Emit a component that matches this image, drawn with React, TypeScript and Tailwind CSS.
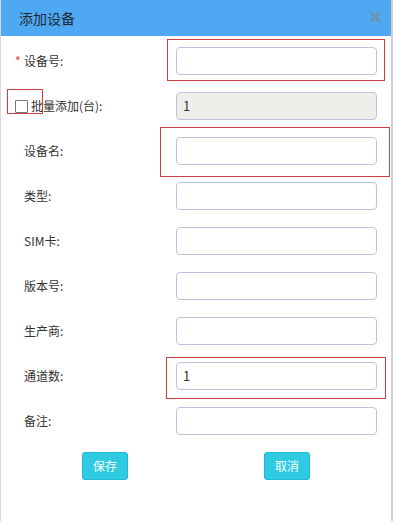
import React from "react";

const font = { fontFamily: '"Microsoft YaHei", "Noto Sans CJK SC", "Noto Sans", sans-serif' };

const rows = [
  { label: "设备号:", required: true, value: "" },
  { label: "批量添加(台):", checkbox: true, value: "1", disabled: true },
  { label: "设备名:", value: "" },
  { label: "类型:", value: "" },
  { label: "SIM卡:", value: "" },
  { label: "版本号:", value: "" },
  { label: "生产商:", value: "" },
  { label: "通道数:", value: "1" },
  { label: "备注:", value: "" },
];

export default function App() {
  return (
    <div
      className="relative w-[393px] h-[521px] bg-white border-l border-l-[#d8d8d8] border-r-2 border-r-[#d0d0d0] overflow-hidden"
      style={font}
    >
      {/* Header */}
      <div className="h-[36px] bg-[#4ea9f2] flex items-center justify-between pl-[18px] pr-[10px]">
        <span className="text-[14px] text-[#1d2a36]">添加设备</span>
        <svg width="12" height="12" viewBox="0 0 12 12" className="mt-[-2px]">
          <path d="M2 2 L10 10 M10 2 L2 10" stroke="#6e92b2" strokeWidth="2.8" strokeLinecap="round" />
        </svg>
      </div>

      {/* Form */}
      <div className="flex flex-col gap-[17px] pt-[11px]">
        {rows.map((r, i) => (
          <div key={i} className="flex items-center h-[28px]">
            <div className="w-[175px] flex items-center text-[12px] text-[#333]">
              {r.required ? (
                <>
                  <span className="w-[9px] ml-[14px] text-[#e53935] text-[12px]">*</span>
                  <span>{r.label}</span>
                </>
              ) : r.checkbox ? (
                <>
                  <span className="ml-[14px] w-[13px] h-[13px] border border-[#777] bg-white rounded-[1px]" />
                  <span className="ml-[3px]">{r.label}</span>
                </>
              ) : (
                <span className="ml-[23px]">{r.label}</span>
              )}
            </div>
            <div
              className={`w-[201px] h-[28px] border border-[#c4bfe2] rounded-[4px] flex items-center pl-[6px] text-[13px] text-[#333] ${
                r.disabled ? "bg-[#efeeea]" : "bg-white"
              }`}
            >
              {r.value}
            </div>
          </div>
        ))}

        {/* Buttons */}
        <div className="flex items-center pl-[81px] gap-[136px]">
          <button className="w-[46px] h-[28px] rounded-[3px] bg-[#2ecae2] border border-[#22b7d2] text-white text-[12px]">
            保存
          </button>
          <button className="w-[46px] h-[28px] rounded-[3px] bg-[#2ecae2] border border-[#22b7d2] text-white text-[12px]">
            取消
          </button>
        </div>
      </div>

      {/* Red annotation boxes */}
      <div className="absolute left-[166px] top-[39px] w-[218px] h-[42px] border border-[#c9403e]" />
      <div className="absolute left-[6px] top-[89px] w-[36px] h-[25px] border border-[#c9403e]" />
      <div className="absolute left-[159px] top-[127px] w-[230px] h-[50px] border border-[#c9403e]" />
      <div className="absolute left-[165px] top-[357px] w-[220px] h-[42px] border border-[#c9403e]" />
    </div>
  );
}
